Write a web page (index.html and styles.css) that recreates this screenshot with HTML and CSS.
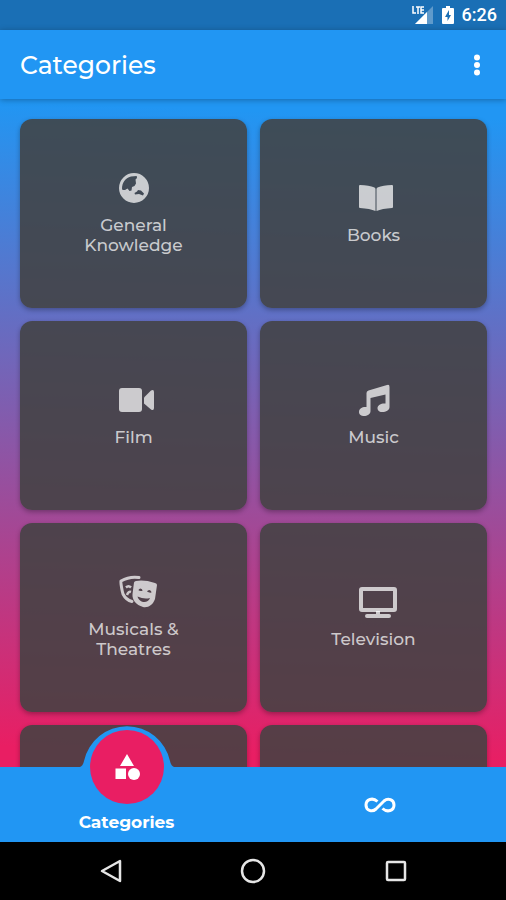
FILE: index.html
```html
<!DOCTYPE html>
<html lang="en">
<head>
<meta charset="utf-8">
<meta name="viewport" content="width=device-width, initial-scale=1">
<title>Categories</title>
<link rel="stylesheet" href="styles.css">
</head>
<body>
<div class="status">
  <svg class="signal" viewBox="0 0 22 18" aria-hidden="true">
    <path d="M21 0V18H3Z" fill="#fff" opacity=".3"/>
    <path d="M15 6V18H3Z" fill="#fff"/>
    <path d="M0 0H12V9H0Z" fill="#1a6fb5"/>
    <path d="M1 0V7H4M4 1H8M6 1V8M12 1H9V7H12M9 4H12" fill="none" stroke="#fff" stroke-width="1.5"/>
  </svg>
  <svg class="battery" viewBox="0 0 12 18" aria-hidden="true">
    <path d="M4 0H8V2H11Q12 2 12 3V17Q12 18 11 18H1Q0 18 0 17V3Q0 2 1 2H4Z" fill="#fff"/>
    <path d="M7 4L3 11H5.500V15L9 9H7Z" fill="#1a6fb5"/>
  </svg>
  <span class="time">6:26</span>
</div>
<header class="appbar">
  <h1>Categories</h1>
  <button class="more" aria-label="More options">
    <svg viewBox="0 0 24 24"><circle cx="12" cy="4.500" r="3"/><circle cx="12" cy="12" r="3"/><circle cx="12" cy="19.500" r="3"/></svg>
  </button>
</header>
<main class="list">
  <button class="card">
    <svg class="icon" viewBox="0 0 30 30"><path fill-rule="evenodd" d="M15 0A15 15 0 1 0 15 30A15 15 0 1 0 15 0ZM3 15.500C3 10 6 5 12 3.500L17.500 3C18.500 4 18 5.500 16.500 6.500L17 10.500L15.500 13L13 14L12.500 17.500L10.500 18L8.500 15.500L6 17L3.500 17ZM15.500 20L18 18.500L19 17L22 17.500L25 20.500L24 22.500L20 21L16 21.500Z"/></svg>
    <span>General<br>Knowledge</span>
  </button>
  <button class="card">
    <svg class="icon" viewBox="0 0 30 30"><path d="M0 3Q0 2 1 2Q10 2 15.500 4.500Q16.500 5 16.500 6V28Q11 25.500 1 25Q0 25 0 24ZM34 3Q34 2 33 2Q24 2 18.500 4.500Q17.500 5 17.500 6V28Q23 25.500 33 25Q34 25 34 24Z"/></svg>
    <span>Books</span>
  </button>
  <button class="card">
    <svg class="icon" viewBox="0 0 30 30"><rect y="3" width="23" height="24" rx="3"/><path d="M25 12.500L32 5.500Q35 4 35 7V23Q35 26 32 24.500L25 18.500Z"/></svg>
    <span>Film</span>
  </button>
  <button class="card">
    <svg class="icon" viewBox="0 0 30 30"><path d="M7.500 8Q7.500 6 9.500 5.500L28 0Q30.500 -1 30.500 2V22C30.500 28 18.500 29 18.500 23.500C18.500 19.500 23 18 26.500 18.500V9.500L11.500 13V26C11.500 32 0 33 0 27C0 23 4 21.500 7.500 22Z"/></svg>
    <span>Music</span>
  </button>
  <button class="card">
    <svg class="icon" viewBox="0 0 30 30">
      <path fill="none" stroke="currentColor" stroke-width="3" stroke-linecap="round" stroke-linejoin="round" d="M20 .5C14 -.5 8 .5 2 4C1.500 5 3 14 4 17C6 21 9 23.500 13 24.500"/>
      <path fill="none" stroke="currentColor" stroke-width="2.500" d="M7 10.500Q9.500 8 12 10.500M8 18Q9.500 14 12 15"/>
      <path fill-rule="evenodd" d="M15 5.500Q15.500 4 17 4Q25 2.500 36 6Q38 6.500 38 8L36 22C34 28 29 31 24 30C17 28 13 23 13.500 17ZM19.500 13Q19.500 14 23.500 14Q23.500 11.500 21.500 11.500Q20 11.500 19.500 13ZM28 14.500Q30 16 32.500 15.500Q32.500 13.500 30.500 13Q28.500 13 28 14.500ZM18.500 19.500C20 26 29 27 31 21Q25 22.500 18.500 19.500Z"/>
    </svg>
    <span>Musicals &amp;<br>Theatres</span>
  </button>
  <button class="card">
    <svg class="icon" viewBox="0 0 30 30"><rect x="2" y="2" width="34" height="21" rx="1" fill="none" stroke="currentColor" stroke-width="4" stroke-linejoin="round"/><path d="M17 24H21V27H30Q32 27 32 29Q32 31 30 31H8Q6 31 6 29Q6 27 8 27H17Z"/></svg>
    <span>Television</span>
  </button>
  <div class="card"></div>
  <div class="card"></div>
</main>
<nav class="tabs">
  <a class="tab active" href="#categories">
    <svg class="bubble" viewBox="0 0 100 88" aria-hidden="true">
      <path d="M3 45V44Q6 43 7 38A44 44 0 0 1 93 38Q94 43 97 44V45Z" fill="#2196f3"/>
      <circle cx="50" cy="44" r="37" fill="#e91e63"/>
      <path d="M50 31L57 43H43ZM38.500 45.500H49V56H38.500Z" fill="#fff"/>
      <circle cx="57" cy="51" r="6" fill="#fff"/>
    </svg>
    <span>Categories</span>
  </a>
  <a class="tab" href="#endless" aria-label="Endless">
    <svg class="infinity" viewBox="0 0 32 16" aria-hidden="true"><path d="M13.500 4.500C8.500 0 2 2.500 2 8C2 13.500 8 15.500 12 12L20 4C24 .5 30 2.500 30 8C30 13.500 23.500 16 18.500 11.500" fill="none" stroke="#fff" stroke-width="3"/></svg>
  </a>
</nav>
<div class="system">
  <button aria-label="Back"><svg viewBox="0 0 24 24"><path d="M22 2V22L4 12Z"/></svg></button>
  <button aria-label="Home"><svg viewBox="0 0 24 24"><circle cx="12" cy="12" r="11"/></svg></button>
  <button aria-label="Recent apps"><svg viewBox="0 0 24 24"><rect x="3" y="3" width="18" height="18" rx="1"/></svg></button>
</div>
</body>
</html>
```
FILE: styles.css
```css
* { box-sizing: border-box; }

body {
  margin: 0;
  height: 100vh;
  display: flex;
  flex-direction: column;
  overflow: hidden;
  background: #000;
  color: #fff;
  font-family: Montserrat, Inter, sans-serif;
}

button {
  margin: 0;
  padding: 0;
  border: 0;
  background: none;
  color: inherit;
  font: inherit;
}

svg { display: block; overflow: visible; }

.status {
  flex: none;
  height: 30px;
  padding: 0 9px;
  display: flex;
  align-items: center;
  justify-content: flex-end;
  gap: 8px;
  background: #1a6fb5;
}
.signal { width: 22px; height: 18px; }
.battery { width: 12px; height: 18px; }
.time { font: 500 18px/30px Roboto, sans-serif; }

.appbar {
  flex: none;
  position: relative;
  z-index: 1;
  height: 69px;
  padding: 0 17px 0 20px;
  display: flex;
  align-items: center;
  justify-content: space-between;
  background: #2196f3;
  box-shadow: 0 1px 6px rgba(0, 0, 0, .3);
}
.appbar h1 { margin: 0; font-size: 25px; line-height: 32px; font-weight: 500; }
.more svg { width: 24px; height: 24px; fill: #fff; }

.list {
  flex: 1;
  min-height: 0;
  overflow: hidden;
  padding: 20px 19px 0 20px;
  display: grid;
  grid-template-columns: 1fr 1fr;
  grid-auto-rows: 189px;
  gap: 13px;
  background: linear-gradient(182deg, #2196f3 3%, #e91e63 97%);
}
.card {
  display: flex;
  flex-direction: column;
  align-items: center;
  justify-content: center;
  gap: 12px;
  border-radius: 12px;
  background: rgba(66, 66, 66, .88);
  box-shadow: 0 2px 5px rgba(0, 0, 0, .3);
  color: rgba(255, 255, 255, .72);
  font-size: 17px;
  line-height: 20px;
  font-weight: 500;
  text-align: center;
}
.icon { width: 30px; height: 30px; fill: currentColor; }

.tabs {
  flex: none;
  position: relative;
  z-index: 1;
  height: 75px;
  display: grid;
  grid-template-columns: 1fr 1fr;
  background: #2196f3;
}
.tab {
  position: relative;
  display: flex;
  align-items: center;
  justify-content: center;
  color: #fff;
  text-decoration: none;
  font-size: 17px;
  line-height: 20px;
  font-weight: 700;
}
.active { align-items: flex-end; padding-bottom: 10px; }
.bubble {
  position: absolute;
  top: -44px;
  left: 50%;
  width: 100px;
  height: 88px;
  transform: translateX(-50%);
}
.infinity { width: 32px; height: 16px; }

.system {
  flex: none;
  height: 58px;
  padding: 0 39px;
  display: grid;
  grid-template-columns: 1fr 1fr 1fr;
  place-items: center;
  background: #000;
}
.system svg { width: 24px; height: 24px; fill: none; stroke: #e6e6e6; stroke-width: 2.5; stroke-linejoin: round; }
```
